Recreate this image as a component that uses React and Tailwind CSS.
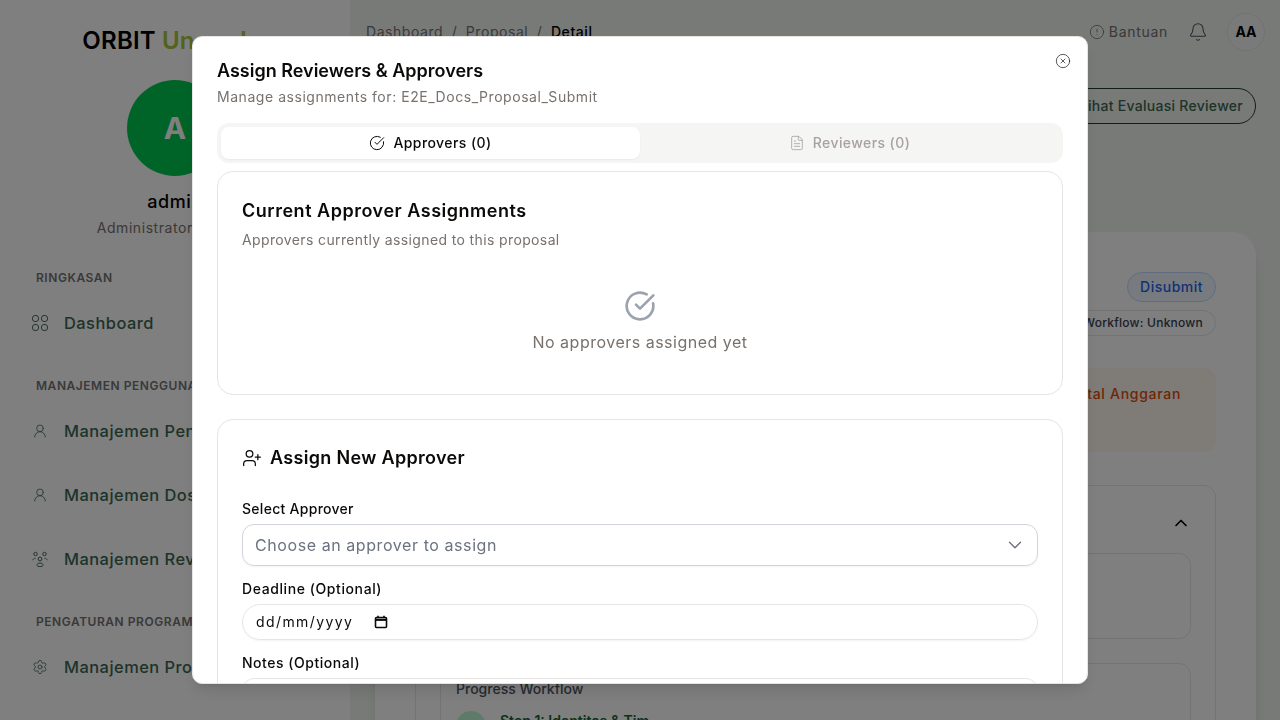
import { Bell, ChevronDown, ChevronUp, CircleAlert, CircleCheckBig, CircleX, FileText, Settings, UserPlus, UserRound } from "lucide-react"

const GridIcon = () => (
  <svg width="16" height="16" viewBox="0 0 16 16" fill="none" stroke="currentColor" strokeWidth="1">
    <rect x="0.5" y="0.5" width="6" height="6" rx="2.5" />
    <rect x="9.5" y="0.5" width="6" height="6" rx="2.5" />
    <rect x="0.5" y="9.5" width="6" height="6" rx="2.5" />
    <rect x="9.5" y="9.5" width="6" height="6" rx="2.5" />
  </svg>
)

const GroupIcon = () => (
  <svg width="16" height="16" viewBox="0 0 16 16" fill="none" stroke="currentColor" strokeWidth="1">
    <circle cx="3.5" cy="3" r="1.7" />
    <circle cx="12.5" cy="3" r="1.7" />
    <circle cx="8" cy="8" r="1.9" />
    <path d="M0.8 9.2c.4-1.2 1.3-1.9 2.7-1.9M15.2 9.2c-.4-1.2-1.3-1.9-2.7-1.9" />
    <path d="M5 14c0-1.2 1.2-2 3-2s3 .8 3 2-1.2 1.6-3 1.6S5 15.2 5 14z" />
  </svg>
)

const SideItem = ({ icon, label }) => (
  <div className="flex h-16 items-center gap-4 pl-8 text-[16.4px] font-medium tracking-[0.03em] whitespace-nowrap text-[#3a6650]">
    <span className="text-[#4a6a5c]">{icon}</span>
    {label}
  </div>
)

const SideGroup = ({ title, children }) => (
  <div className="mb-[18px]">
    <div className="flex h-[26px] items-center pl-9 text-xs font-semibold tracking-[0.045em] whitespace-nowrap text-[#737373]">{title}</div>
    {children}
  </div>
)

const Sidebar = () => (
  <aside className="flex w-[350px] shrink-0 flex-col bg-white">
    <div className="flex h-20 items-center justify-center pt-0.5 pl-2 text-2xl font-semibold tracking-[0.01em] whitespace-nowrap text-black">
      ORBIT <span className="ml-1.5 text-[#a4c639]">Unggulan</span>
    </div>
    <div className="flex flex-col items-center">
      <div className="flex h-24 w-24 items-center justify-center rounded-full bg-[#00c950] text-[30px] font-bold text-white">A</div>
      <div className="mt-3 text-lg font-medium tracking-[0.03em] text-black">admin</div>
      <div className="mt-[2px] mr-2 text-sm tracking-[0.04em] text-[#78716c]">Administrator Sistem</div>
    </div>
    <div className="mt-[27px]">
      <SideGroup title="RINGKASAN">
        <SideItem icon={<GridIcon />} label="Dashboard" />
      </SideGroup>
      <SideGroup title="MANAJEMEN PENGGUNA">
        <SideItem icon={<UserRound size={16} strokeWidth={1.25} />} label="Manajemen Pengguna" />
        <SideItem icon={<UserRound size={16} strokeWidth={1.25} />} label="Manajemen Dosen" />
        <SideItem icon={<GroupIcon />} label="Manajemen Reviewer" />
      </SideGroup>
      <SideGroup title="PENGATURAN PROGRAM">
        <SideItem icon={<Settings size={16} strokeWidth={1.25} />} label="Manajemen Program" />
      </SideGroup>
    </div>
  </aside>
)

const Page = () => (
  <main className="min-w-0 flex-1 bg-[#f1f4f1]">
    <header className="flex h-16 items-center justify-between pr-[15px] pl-4">
      <div className="flex items-center gap-[6.5px] text-sm tracking-[0.04em] text-[#737373]">
        <span>Dashboard</span><span className="mx-0.5">/</span><span>Proposal</span><span className="mx-0.5">/</span>
        <span className="font-medium text-black">Detail</span>
      </div>
      <div className="flex items-center">
        <div className="flex items-center gap-1 text-sm tracking-[0.05em] text-[#737373]">
          <CircleAlert size={16} strokeWidth={1.25} />
          Bantuan
        </div>
        <Bell size={20} strokeWidth={1.25} className="ml-5 text-[#4b5563]" />
        <div className="ml-[19px] flex h-[38px] w-[38px] items-center justify-center rounded-full border border-[#e7e5e4] bg-[#f5f5f4] text-sm font-bold text-black">AA</div>
      </div>
    </header>
    <div className="mt-6 flex justify-end pr-6">
      <button className="h-9 rounded-full border border-[#1f3d30] px-3 text-sm font-medium tracking-[0.02em] whitespace-nowrap text-[#3a6650]">
        Lihat Evaluasi Reviewer
      </button>
    </div>
    <section className="mt-[108px] mr-6 ml-[25px] rounded-3xl bg-white p-10 shadow-lg">
      <div className="flex flex-col items-end">
        <span className="flex h-[30px] items-center rounded-full border border-[#bfdbfe] bg-[#eff6ff] px-3 text-sm font-medium tracking-[0.035em] text-[#2563eb]">Disubmit</span>
        <span className="mt-2 flex h-[26px] items-center rounded-full border border-[#e5e7eb] px-3 text-xs font-medium tracking-[0.02em] text-[#374151]">Workflow: Unknown</span>
      </div>
      <div className="mt-8 flex h-[84px] justify-end rounded-xl bg-[#fff7ed] pt-4 pr-[35px] text-sm font-medium tracking-[0.05em] text-[#dc4c0c]">
        Total Anggaran
      </div>
      <div className="mt-[33px] rounded-xl border border-[#e5e7eb] px-6">
        <div className="flex h-[67px] items-center justify-end pt-1.5 text-black">
          <ChevronUp size={20} />
        </div>
        <div className="h-[86px] rounded-xl border border-[#e5e7eb]" />
        <div className="mt-6 rounded-xl border border-[#e5e7eb] pt-[15px] pl-[15px]">
          <div className="text-sm font-medium text-[#4b5563]">Progress Workflow</div>
          <div className="mt-3 flex items-start gap-[14px]">
            <div className="h-[30px] w-[30px] rounded-full bg-[#bbf7d0]" />
            <div className="text-sm font-semibold text-[#166534]">Step 1: Identitas &amp; Tim</div>
          </div>
        </div>
      </div>
    </section>
  </main>
)

const Field = ({ label, labelClass, className, children }) => (
  <div className={className}>
    <div className={`mb-[5px] text-sm leading-5 font-medium text-[#0c0a09] ${labelClass}`}>{label}</div>
    {children}
  </div>
)

const Modal = () => (
  <div className="fixed inset-0 flex items-center justify-center bg-black/50">
    <div className="relative h-[648px] w-[896px] overflow-hidden rounded-[10px] border border-[#e7e5e4] bg-white px-6 pt-[25px] shadow-lg">
      <button className="absolute top-4 right-4 text-[#0c0a09]">
        <CircleX size={16} strokeWidth={1} />
      </button>
      <h2 className="text-lg leading-[18px] font-semibold whitespace-nowrap text-[#0c0a09]">Assign Reviewers &amp; Approvers</h2>
      <p className="mt-[7px] text-sm leading-5 tracking-[0.039em] whitespace-nowrap text-[#78716c]">Manage assignments for: E2E_Docs_Proposal_Submit</p>
      <div className="mt-4 grid h-10 grid-cols-2 rounded-xl bg-[#f5f5f4] p-1 text-sm font-medium tracking-[0.03em]">
        <div className="flex items-center justify-center gap-2 rounded-lg bg-white text-[#0c0a09] shadow-xs">
          <CircleCheckBig size={16} strokeWidth={1.5} />
          Approvers (0)
        </div>
        <div className="flex items-center justify-center gap-2 text-[#a8a29e]">
          <FileText size={16} strokeWidth={1.25} />
          Reviewers (0)
        </div>
      </div>
      <div className="mt-2 h-[224px] rounded-2xl border border-[#e7e5e4] px-6 pt-[25px]">
        <h3 className="text-lg leading-7 font-semibold tracking-[0.029em] text-[#0c0a09]">Current Approver Assignments</h3>
        <p className="mt-[5px] text-sm leading-5 tracking-[0.0265em] text-[#78716c]">Approvers currently assigned to this proposal</p>
        <div className="mt-10 flex flex-col items-center">
          <CircleCheckBig size={32} className="text-[#9ca3af]" />
          <p className="mt-2 text-base leading-6 tracking-[0.031em] text-[#78716c]">No approvers assigned yet</p>
        </div>
      </div>
      <div className="mt-6 rounded-2xl border border-[#e7e5e4] px-6 pt-6 pb-6">
        <h3 className="flex h-7 items-center gap-2 text-lg font-semibold tracking-[0.018em] text-[#0c0a09]">
          <UserPlus size={20} strokeWidth={1.5} />
          Assign New Approver
        </h3>
        <Field label="Select Approver" labelClass="tracking-[0.02em]" className="mt-[27px]">
          <div className="flex h-[42px] items-center justify-between rounded-xl border border-[#d1d5db] pr-[11px] pl-3 text-base tracking-[0.036em] text-[#6b7280] shadow-xs">
            Choose an approver to assign
            <ChevronDown size={22} strokeWidth={1.5} className="text-[#6b7280]" />
          </div>
        </Field>
        <Field label="Deadline (Optional)" labelClass="tracking-[0.042em]" className="mt-[13px]">
          <div className="flex h-9 items-center rounded-full border border-[#e7e5e4] pl-[13px] text-sm tracking-[0.1em] text-[#0c0a09] shadow-xs">
            dd/mm/yyyy
            <svg width="14" height="14" viewBox="0 0 14 14" className="ml-[21px]" fill="none" stroke="#0c0a09" strokeWidth="1.6">
              <rect x="1.5" y="2.5" width="11" height="10" rx="1" />
              <path d="M1.5 4.8h11" strokeWidth="2.2" />
              <path d="M4 .8v2M10 .8v2" />
            </svg>
          </div>
        </Field>
        <Field label="Notes (Optional)" labelClass="tracking-[0.038em]" className="mt-[13px]">
          <div className="h-20 rounded-xl border border-[#e7e5e4]" />
        </Field>
      </div>
    </div>
  </div>
)

export default function App() {
  return (
    <div className="flex h-screen overflow-hidden font-['Inter',sans-serif]">
      <Sidebar />
      <Page />
      <Modal />
    </div>
  )
}
